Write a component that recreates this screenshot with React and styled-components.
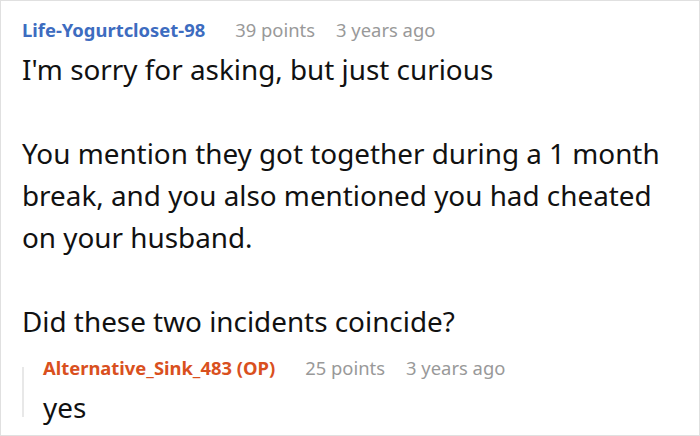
import styled, { createGlobalStyle } from "styled-components";

const GlobalStyle = createGlobalStyle`
  html, body {
    margin: 0;
    padding: 0;
    background: #fff;
  }
  body {
    font-family: "Noto Sans", "Open Sans", sans-serif;
  }
`;

const Card = styled.div`
  box-sizing: border-box;
  width: 700px;
  height: 436px;
  border: 1px solid #e0e0e0;
  padding: 17px 21px 0 21px;
  background: #fff;
  overflow: hidden;
`;

const Meta = styled.div`
  display: flex;
  align-items: baseline;
  gap: 21px;
  height: 24px;
  font-size: 18.4px;
  line-height: 24px;
  white-space: nowrap;
`;

const Author = styled.span`
  font-weight: 700;
  color: ${(p) => (p.$op ? "#d9501e" : "#3d6cc0")};
  margin-right: 9px;
`;

const Info = styled.span`
  color: #999;
`;

const Body = styled.div`
  font-size: 27.85px;
  line-height: 42px;
  color: #111;
  white-space: pre-wrap;
  margin-top: 6px;
`;

const Reply = styled.div`
  display: flex;
  margin-top: 14px;
`;

const ReplyLine = styled.div`
  flex: none;
  width: 2px;
  height: 50px;
  margin-top: 11px;
  margin-right: 19px;
  background: #e8e8e8;
`;

const ReplyContent = styled.div`
  flex: 1;
`;

const Comment = ({ author, op, points, time, children }) => (
  <>
    <Meta>
      <Author $op={op}>{author}</Author>
      <Info>{points} points</Info>
      <Info>{time}</Info>
    </Meta>
    {children}
  </>
);

export default function App() {
  return (
    <>
      <GlobalStyle />
      <Card>
        <Comment author="Life-Yogurtcloset-98" points={39} time="3 years ago">
          <Body>
            {"I'm sorry for asking, but just curious\n\nYou mention they got together during a 1 month break, and you also mentioned you had cheated on your husband.\n\nDid these two incidents coincide?"}
          </Body>
        </Comment>
        <Reply>
          <ReplyLine />
          <ReplyContent>
            <Comment
              author="Alternative_Sink_483 (OP)"
              op
              points={25}
              time="3 years ago"
            >
              <Body>yes</Body>
            </Comment>
          </ReplyContent>
        </Reply>
      </Card>
    </>
  );
}
